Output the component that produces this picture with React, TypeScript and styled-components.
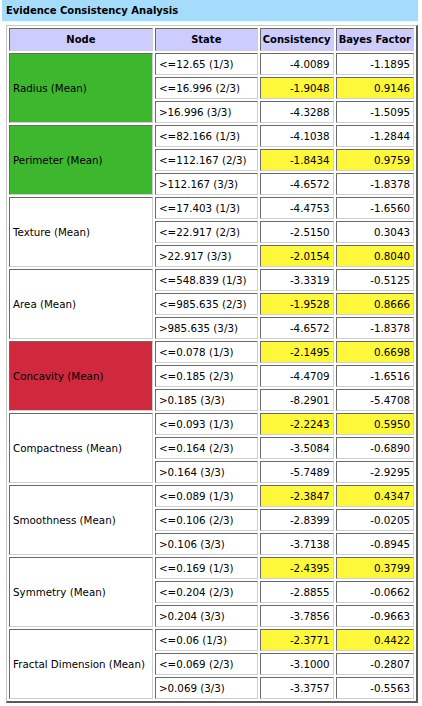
import React from "react";
import styled, { createGlobalStyle } from "styled-components";

const GlobalStyle = createGlobalStyle`
  html, body {
    margin: 0;
    padding: 0;
    background: #ffffff;
  }
  body {
    font-family: "DejaVu Sans", "Liberation Sans", sans-serif;
    color: #000;
  }
`;

const Panel = styled.div`
  width: 422px;
  height: 706px;
  padding: 0 4px 0 2px;
  box-sizing: border-box;
`;

const TitleBar = styled.div`
  height: 21px;
  background: #a5dcfb;
  padding-left: 4px;
  font-size: 10px;
  font-weight: bold;
  line-height: 21px;
`;

const Table = styled.table`
  margin: 4px 0 0 4px;
  border-collapse: separate;
  border-spacing: 2px;
  border-style: solid;
  border-width: 1px 2px 2px 1px;
  border-color: #c4c4c4 #5a5a5a #5a5a5a #c4c4c4;
  table-layout: fixed;
  font-size: 10.3px;
`;

const Cell = styled.td`
  box-sizing: border-box;
  height: 22px;
  padding: 0 3px;
  border: 1px solid;
  border-color: #6a6a6a #cfcfcf #cfcfcf #6a6a6a;
  white-space: nowrap;
  vertical-align: middle;
`;

const HeadCell = styled(Cell).attrs({ as: "th" })<{ $w: number }>`
  width: ${(p) => p.$w}px;
  height: 23px;
  padding: 0 2px;
  background: #ccccff;
  font-size: 10px;
  font-weight: bold;
  text-align: center;
`;

const NodeCell = styled(Cell)<{ $bg: string }>`
  background: ${(p) => p.$bg};
`;

const StateCell = styled(Cell)`
  background: #ffffff;
`;

const NumCell = styled(Cell)<{ $hit: boolean }>`
  background: ${(p) => (p.$hit ? "#fdf83a" : "#ffffff")};
  text-align: right;
`;

type Row = [string, string, string];
type Node = { name: string; bg: string; hit: number; rows: Row[] };

const GREEN = "#3cb72e";
const RED = "#d0293d";
const WHITE = "#ffffff";

const nodes: Node[] = [
  {
    name: "Radius (Mean)", bg: GREEN, hit: 1,
    rows: [
      ["<=12.65 (1/3)", "-4.0089", "-1.1895"],
      ["<=16.996 (2/3)", "-1.9048", "0.9146"],
      [">16.996 (3/3)", "-4.3288", "-1.5095"],
    ],
  },
  {
    name: "Perimeter (Mean)", bg: GREEN, hit: 1,
    rows: [
      ["<=82.166 (1/3)", "-4.1038", "-1.2844"],
      ["<=112.167 (2/3)", "-1.8434", "0.9759"],
      [">112.167 (3/3)", "-4.6572", "-1.8378"],
    ],
  },
  {
    name: "Texture (Mean)", bg: WHITE, hit: 2,
    rows: [
      ["<=17.403 (1/3)", "-4.4753", "-1.6560"],
      ["<=22.917 (2/3)", "-2.5150", "0.3043"],
      [">22.917 (3/3)", "-2.0154", "0.8040"],
    ],
  },
  {
    name: "Area (Mean)", bg: WHITE, hit: 1,
    rows: [
      ["<=548.839 (1/3)", "-3.3319", "-0.5125"],
      ["<=985.635 (2/3)", "-1.9528", "0.8666"],
      [">985.635 (3/3)", "-4.6572", "-1.8378"],
    ],
  },
  {
    name: "Concavity (Mean)", bg: RED, hit: 0,
    rows: [
      ["<=0.078 (1/3)", "-2.1495", "0.6698"],
      ["<=0.185 (2/3)", "-4.4709", "-1.6516"],
      [">0.185 (3/3)", "-8.2901", "-5.4708"],
    ],
  },
  {
    name: "Compactness (Mean)", bg: WHITE, hit: 0,
    rows: [
      ["<=0.093 (1/3)", "-2.2243", "0.5950"],
      ["<=0.164 (2/3)", "-3.5084", "-0.6890"],
      [">0.164 (3/3)", "-5.7489", "-2.9295"],
    ],
  },
  {
    name: "Smoothness (Mean)", bg: WHITE, hit: 0,
    rows: [
      ["<=0.089 (1/3)", "-2.3847", "0.4347"],
      ["<=0.106 (2/3)", "-2.8399", "-0.0205"],
      [">0.106 (3/3)", "-3.7138", "-0.8945"],
    ],
  },
  {
    name: "Symmetry (Mean)", bg: WHITE, hit: 0,
    rows: [
      ["<=0.169 (1/3)", "-2.4395", "0.3799"],
      ["<=0.204 (2/3)", "-2.8855", "-0.0662"],
      [">0.204 (3/3)", "-3.7856", "-0.9663"],
    ],
  },
  {
    name: "Fractal Dimension (Mean)", bg: WHITE, hit: 0,
    rows: [
      ["<=0.06 (1/3)", "-2.3771", "0.4422"],
      ["<=0.069 (2/3)", "-3.1000", "-0.2807"],
      [">0.069 (3/3)", "-3.3757", "-0.5563"],
    ],
  },
];

export default function App() {
  return (
    <>
      <GlobalStyle />
      <Panel>
        <TitleBar>Evidence Consistency Analysis</TitleBar>
        <Table>
          <thead>
            <tr>
              <HeadCell $w={144}>Node</HeadCell>
              <HeadCell $w={103}>State</HeadCell>
              <HeadCell $w={74}>Consistency</HeadCell>
              <HeadCell $w={77}>Bayes Factor</HeadCell>
            </tr>
          </thead>
          <tbody>
            {nodes.map((node) =>
              node.rows.map((row, i) => (
                <tr key={node.name + i}>
                  {i === 0 && (
                    <NodeCell rowSpan={3} $bg={node.bg}>
                      {node.name}
                    </NodeCell>
                  )}
                  <StateCell>{row[0]}</StateCell>
                  <NumCell $hit={i === node.hit}>{row[1]}</NumCell>
                  <NumCell $hit={i === node.hit}>{row[2]}</NumCell>
                </tr>
              ))
            )}
          </tbody>
        </Table>
      </Panel>
    </>
  );
}
